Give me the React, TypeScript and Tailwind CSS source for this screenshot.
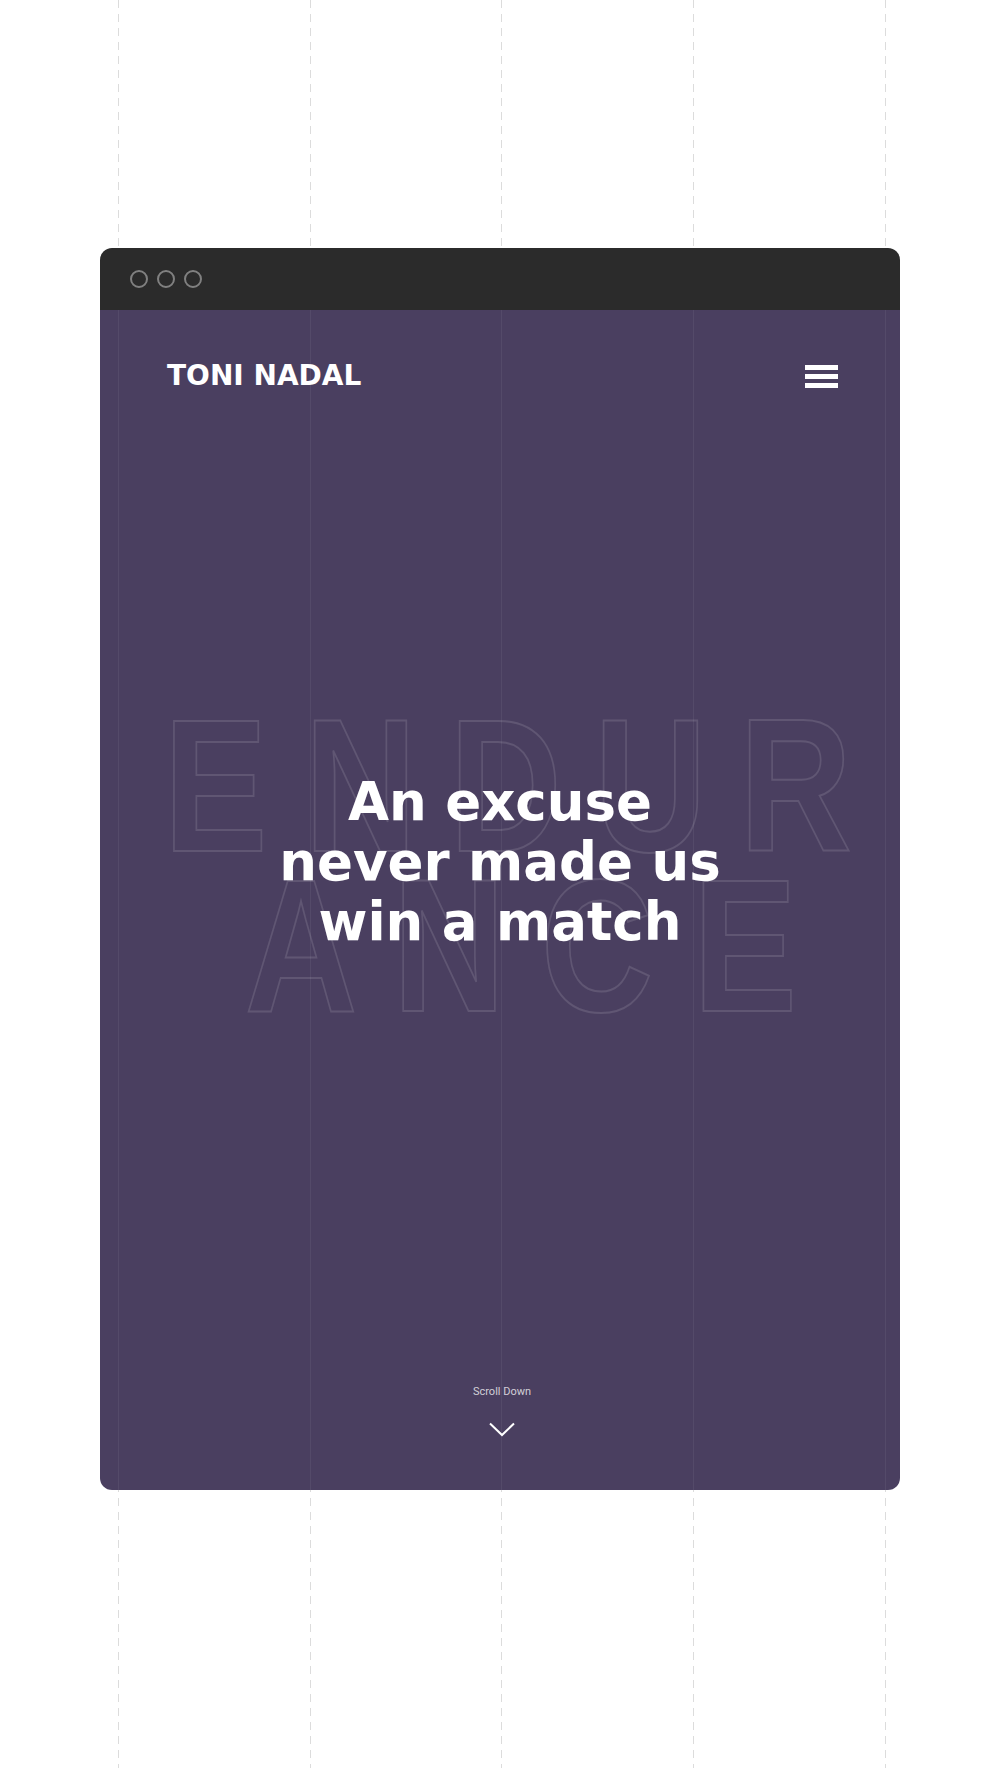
import React from "react";

const guideX = ["left-[118px]", "left-[310px]", "left-[501px]", "left-[693px]", "left-[885px]"];
const colX = ["left-[18px]", "left-[210px]", "left-[401px]", "left-[593px]", "left-[785px]"];

function OutlineLetter({ ch, w }: { ch: string; w: string }) {
  return (
    <span
      className={`${w} shrink-0 text-center scale-x-[0.82] text-transparent [-webkit-text-stroke:2px_rgba(255,255,255,0.12)]`}
    >
      {ch}
    </span>
  );
}

export default function App() {
  return (
    <div className="relative w-[1000px] h-[1768px] bg-white overflow-hidden">
      {guideX.map((x) => (
        <div
          key={x}
          className={`absolute top-0 ${x} h-full w-px bg-[image:repeating-linear-gradient(to_bottom,#dcdcdc_0px,#dcdcdc_8px,transparent_8px,transparent_14px)]`}
        />
      ))}

      <div className="relative pt-[248px]">
        <div className="mx-auto w-[800px] h-[1242px] rounded-[12px] overflow-hidden flex flex-col">
          {/* title bar */}
          <div className="h-[62px] shrink-0 bg-[#2b2b2b] flex items-center pl-[30px] gap-[9px]">
            <span className="w-[18px] h-[18px] rounded-full border-2 border-[#808080]" />
            <span className="w-[18px] h-[18px] rounded-full border-2 border-[#808080]" />
            <span className="w-[18px] h-[18px] rounded-full border-2 border-[#808080]" />
          </div>

          {/* site */}
          <div className="relative flex-1 bg-[#4a3f60] flex flex-col">
            {colX.map((x) => (
              <div key={x} className={`absolute top-0 bottom-0 ${x} w-px bg-[rgba(255,255,255,0.06)]`} />
            ))}

            <header className="relative h-[132px] shrink-0 flex items-center justify-between pl-[67px] pr-[62px]">
              <div className="font-['DejaVu_Sans',sans-serif] font-bold text-[28px] leading-[32px] text-white">
                TONI NADAL
              </div>
              <div className="flex flex-col gap-[4px]">
                <span className="block w-[33px] h-[5px] bg-white" />
                <span className="block w-[33px] h-[5px] bg-white" />
                <span className="block w-[33px] h-[5px] bg-white" />
              </div>
            </header>

            <main className="relative flex-1">
              <div className="absolute inset-0 flex flex-col justify-center pt-[6px] font-['Liberation_Sans',sans-serif] font-bold text-[190px] leading-[160px] select-none">
                <div className="flex ml-[43px]">
                  <OutlineLetter ch="E" w="w-[145px]" />
                  <OutlineLetter ch="N" w="w-[145px]" />
                  <OutlineLetter ch="D" w="w-[145px]" />
                  <OutlineLetter ch="U" w="w-[145px]" />
                  <OutlineLetter ch="R" w="w-[145px]" />
                </div>
                <div className="flex ml-[127px]">
                  <OutlineLetter ch="A" w="w-[148px]" />
                  <OutlineLetter ch="N" w="w-[148px]" />
                  <OutlineLetter ch="C" w="w-[148px]" />
                  <OutlineLetter ch="E" w="w-[148px]" />
                </div>
              </div>
              <div className="relative h-full flex items-center justify-center">
                <h1 className="font-['DejaVu_Sans',sans-serif] font-bold text-[53px] leading-[60px] text-white text-center">
                  An excuse
                  <br />
                  never made us
                  <br />
                  win a match
                </h1>
              </div>
            </main>

            <footer className="relative h-[208px] shrink-0 flex flex-col items-center pt-[102px] pl-[4px]">
              <div className="font-['Roboto',sans-serif] text-[11px] leading-[16px] text-[rgba(255,255,255,0.75)]">
                Scroll Down
              </div>
              <svg className="mt-[22px]" width="26" height="15" viewBox="0 0 26 15" fill="none">
                <polyline points="1,1.5 13,13 25,1.5" stroke="#ffffff" strokeWidth="2" />
              </svg>
            </footer>
          </div>
        </div>
      </div>
    </div>
  );
}
